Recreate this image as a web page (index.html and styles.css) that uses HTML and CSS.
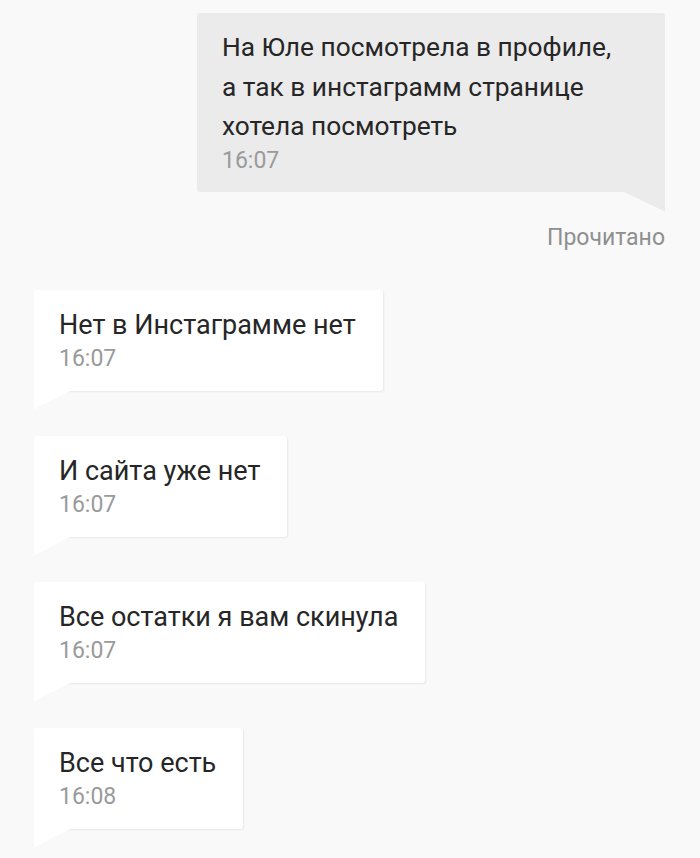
FILE: index.html
```html
<!DOCTYPE html>
<html lang="ru">
<head>
<meta charset="utf-8">
<link rel="stylesheet" href="styles.css">
</head>
<body>
<div class="chat">
  <div class="msg out">
    <div class="bubble">
      <div class="text">На Юле посмотрела в профиле, а так в инстаграмм странице хотела посмотреть</div>
      <div class="time">16:07</div>
    </div>
    <div class="status">Прочитано</div>
  </div>
  <div class="msg in">
    <div class="bubble">
      <div class="text">Нет в Инстаграмме нет</div>
      <div class="time">16:07</div>
    </div>
  </div>
  <div class="msg in">
    <div class="bubble">
      <div class="text">И сайта уже нет</div>
      <div class="time">16:07</div>
    </div>
  </div>
  <div class="msg in">
    <div class="bubble">
      <div class="text">Все остатки я вам скинула</div>
      <div class="time">16:07</div>
    </div>
  </div>
  <div class="msg in">
    <div class="bubble">
      <div class="text">Все что есть</div>
      <div class="time">16:08</div>
    </div>
  </div>
</div>
</body>
</html>
```

FILE: styles.css
```css
* { box-sizing: border-box; }
html, body {
  margin: 0;
  padding: 0;
  background: #f9f9f9;
  font-family: Roboto, "Noto Sans", sans-serif;
}
.chat {
  display: flex;
  flex-direction: column;
  padding: 13px 35px 0 34px;
}
.msg {
  display: flex;
  flex-direction: column;
}
.msg.out {
  align-items: flex-end;
  margin-bottom: 39px;
}
.msg.in {
  align-items: flex-start;
  margin-bottom: 45px;
}
.bubble {
  position: relative;
  padding: 15px 27px 19px 25px;
}
.out .bubble {
  background: #ebebeb;
  width: 468px;
  padding-top: 15px;
  padding-right: 38px;
  padding-bottom: 18px;
  border-radius: 3px 3px 0 3px;
}
.out .text {
  font-size: 26.3px;
  line-height: 39.5px;
}
.in .bubble {
  background: #ffffff;
  border-radius: 3px 3px 3px 0;
  box-shadow: 1px 1px 2px rgba(0, 0, 0, 0.07);
}
.out .bubble::after {
  content: "";
  position: absolute;
  right: 0;
  bottom: -20px;
  width: 42px;
  height: 20px;
  background: #ebebeb;
  clip-path: polygon(0 0, 100% 0, 100% 100%);
}
.in .bubble::after {
  content: "";
  position: absolute;
  left: 0;
  bottom: -19px;
  width: 37px;
  height: 19px;
  background: #ffffff;
  clip-path: polygon(0 0, 100% 0, 0 100%);
}
.text {
  font-size: 27px;
  line-height: 40px;
  color: #262626;
}
.time {
  font-size: 23px;
  line-height: 27px;
  color: #9a9a9a;
}
.status {
  margin-top: 33px;
  font-size: 23px;
  line-height: 26px;
  color: #8f8f8f;
}
```
